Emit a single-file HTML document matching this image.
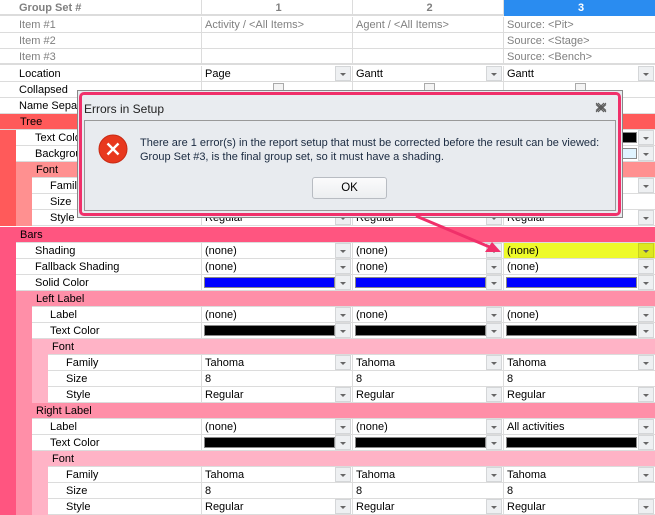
<!DOCTYPE html>
<html><head><style>
*{margin:0;padding:0;box-sizing:border-box}
body{width:655px;height:515px;overflow:hidden;background:#fff;font-family:"Liberation Sans","DejaVu Sans",sans-serif;font-size:11px;color:#000;position:relative}
.r{position:absolute;left:0;width:655px;height:16px;border-bottom:1px solid #dcdcdc}
.b{position:absolute;top:0;height:16px}
.l{position:absolute;top:1px;white-space:nowrap;line-height:15px}
.c{position:absolute;top:0;height:15px;border-left:1px solid #dcdcdc;padding-left:3px;line-height:16px;white-space:nowrap}
.c1{left:201px;width:151px}.c2{left:352px;width:151px}.c3{left:503px;width:152px}
.c i{position:absolute;right:1px;top:0;width:16px;height:15px;background:#eef0f2;border:1px solid #d4d6d8}
.c i:after{content:"";position:absolute;left:4px;top:6px;border-left:3.5px solid transparent;border-right:3.5px solid transparent;border-top:3px solid #666}
.sw{position:absolute;left:2px;top:2px;height:11px;width:131px;border:1px solid #888}
.g{color:#808080}
.ck{position:absolute;top:1px;width:11px;height:8px;border:1px solid #aaa;border-bottom:none;background:#f4f4f4}
</style></head><body>

<div class="r" style="top:0;border-bottom:2px solid #dcdcdc"><span class="l g" style="left:19px;font-weight:bold">Group Set #</span>
<div class="c c1 g" style="text-align:center;font-weight:bold">1</div><div class="c c2 g" style="text-align:center;font-weight:bold">2</div><div class="c c3" style="text-align:center;font-weight:bold;background:#2a8cf0;color:#fff;height:16px">3</div></div>
<div class="r" style="top:17px"><span class="l g" style="left:19px">Item #1</span><div class="c c1 g">Activity / &lt;All Items&gt;</div><div class="c c2 g">Agent / &lt;All Items&gt;</div><div class="c c3 g">Source: &lt;Pit&gt;</div></div>
<div class="r" style="top:33px"><span class="l g" style="left:19px">Item #2</span><div class="c c1"></div><div class="c c2"></div><div class="c c3 g">Source: &lt;Stage&gt;</div></div>
<div class="r" style="top:49px;border-bottom:2px solid #dcdcdc"><span class="l g" style="left:19px">Item #3</span><div class="c c1"></div><div class="c c2"></div><div class="c c3 g">Source: &lt;Bench&gt;</div></div>

<div class="r" style="top:66px"><span class="l" style="left:19px">Location</span><div class="c c1">Page<i></i></div><div class="c c2">Gantt<i></i></div><div class="c c3">Gantt<i></i></div></div>
<div class="r" style="top:82px"><span class="l" style="left:19px">Collapsed</span><div class="c c1"><span class="ck" style="left:71px"></span></div><div class="c c2"><span class="ck" style="left:71px"></span></div><div class="c c3"><span class="ck" style="left:71px"></span></div></div>
<div class="r" style="top:98px"><span class="l" style="left:19px">Name Separator</span><div class="c c1"></div><div class="c c2"></div><div class="c c3"></div></div>

<div class="r" style="top:114px;background:#ff5a5a"><span class="l" style="left:20px">Tree</span></div>
<div class="r" style="top:130px"><span class="l" style="left:35px">Text Color</span><div class="c c1"><span class="sw" style="background:#000"></span><i></i></div><div class="c c2"><span class="sw" style="background:#000"></span><i></i></div><div class="c c3"><span class="sw" style="background:#000"></span><i></i></div></div>
<div class="r" style="top:146px"><span class="l" style="left:35px">Background</span><div class="c c1"><i></i></div><div class="c c2"><i></i></div><div class="c c3"><span class="sw" style="background:#e0f4ff"></span><i></i></div></div>
<div class="r" style="top:162px;left:16px;width:639px;background:#ff9090"><span class="l" style="left:20px">Font</span></div>
<div class="r" style="top:178px"><span class="l" style="left:50px">Family</span><div class="c c1">Tahoma<i></i></div><div class="c c2">Tahoma<i></i></div><div class="c c3">Tahoma<i></i></div></div>
<div class="r" style="top:194px"><span class="l" style="left:50px">Size</span><div class="c c1">8</div><div class="c c2">8</div><div class="c c3">8</div></div>
<div class="r" style="top:210px"><span class="l" style="left:50px">Style</span><div class="c c1">Regular<i></i></div><div class="c c2">Regular<i></i></div><div class="c c3">Regular<i></i></div></div>

<div class="r" style="top:227px;background:#ff5580"><span class="l" style="left:20px">Bars</span></div>
<div class="r" style="top:243px"><span class="l" style="left:35px">Shading</span><div class="c c1">(none)<i></i></div><div class="c c2">(none)<i></i></div><div class="c c3" style="background:#eefa2a">(none)<i style="background:#dde820;border-color:#c8d020"></i></div></div>
<div class="r" style="top:259px"><span class="l" style="left:35px">Fallback Shading</span><div class="c c1">(none)<i></i></div><div class="c c2">(none)<i></i></div><div class="c c3">(none)<i></i></div></div>
<div class="r" style="top:275px"><span class="l" style="left:35px">Solid Color</span><div class="c c1"><span class="sw" style="background:#0000ff"></span><i></i></div><div class="c c2"><span class="sw" style="background:#0000ff"></span><i></i></div><div class="c c3"><span class="sw" style="background:#0000ff"></span><i></i></div></div>

<div class="r" style="top:291px;left:16px;width:639px;background:#ff8fa8"><span class="l" style="left:20px">Left Label</span></div>
<div class="r" style="top:307px"><span class="l" style="left:50px">Label</span><div class="c c1">(none)<i></i></div><div class="c c2">(none)<i></i></div><div class="c c3">(none)<i></i></div></div>
<div class="r" style="top:323px"><span class="l" style="left:50px">Text Color</span><div class="c c1"><span class="sw" style="background:#000"></span><i></i></div><div class="c c2"><span class="sw" style="background:#000"></span><i></i></div><div class="c c3"><span class="sw" style="background:#000"></span><i></i></div></div>
<div class="r" style="top:339px;left:32px;width:623px;background:#ffb3c6"><span class="l" style="left:20px">Font</span></div>
<div class="r" style="top:355px"><span class="l" style="left:66px">Family</span><div class="c c1">Tahoma<i></i></div><div class="c c2">Tahoma<i></i></div><div class="c c3">Tahoma<i></i></div></div>
<div class="r" style="top:371px"><span class="l" style="left:66px">Size</span><div class="c c1">8</div><div class="c c2">8</div><div class="c c3">8</div></div>
<div class="r" style="top:387px"><span class="l" style="left:66px">Style</span><div class="c c1">Regular<i></i></div><div class="c c2">Regular<i></i></div><div class="c c3">Regular<i></i></div></div>

<div class="r" style="top:403px;left:16px;width:639px;background:#ff8fa8"><span class="l" style="left:20px">Right Label</span></div>
<div class="r" style="top:419px"><span class="l" style="left:50px">Label</span><div class="c c1">(none)<i></i></div><div class="c c2">(none)<i></i></div><div class="c c3">All activities<i></i></div></div>
<div class="r" style="top:435px"><span class="l" style="left:50px">Text Color</span><div class="c c1"><span class="sw" style="background:#000"></span><i></i></div><div class="c c2"><span class="sw" style="background:#000"></span><i></i></div><div class="c c3"><span class="sw" style="background:#000"></span><i></i></div></div>
<div class="r" style="top:451px;left:32px;width:623px;background:#ffb3c6"><span class="l" style="left:20px">Font</span></div>
<div class="r" style="top:467px"><span class="l" style="left:66px">Family</span><div class="c c1">Tahoma<i></i></div><div class="c c2">Tahoma<i></i></div><div class="c c3">Tahoma<i></i></div></div>
<div class="r" style="top:483px"><span class="l" style="left:66px">Size</span><div class="c c1">8</div><div class="c c2">8</div><div class="c c3">8</div></div>
<div class="r" style="top:499px"><span class="l" style="left:66px">Style</span><div class="c c1">Regular<i></i></div><div class="c c2">Regular<i></i></div><div class="c c3">Regular<i></i></div></div>

<!-- bands on top -->
<div class="b" style="left:0;top:130px;width:16px;height:96px;background:#ff5a5a"></div>
<div class="b" style="left:16px;top:177px;width:16px;height:49px;background:#ff9090"></div>
<div class="b" style="left:0;top:242px;width:16px;height:273px;background:#ff5580"></div>
<div class="b" style="left:16px;top:306px;width:16px;height:97px;background:#ff8fa8"></div>
<div class="b" style="left:32px;top:354px;width:16px;height:49px;background:#ffb3c6"></div>
<div class="b" style="left:16px;top:418px;width:16px;height:97px;background:#ff8fa8"></div>
<div class="b" style="left:32px;top:466px;width:16px;height:49px;background:#ffb3c6"></div>

<div style="position:absolute;left:77px;top:90px;width:546px;height:128px;border:1px solid #888;background:#e8ebef"></div>
<div style="position:absolute;left:79px;top:92px;width:542px;height:124px;border:3px solid #f0306a;border-radius:5px;background:#e9ecf0">
 <span style="position:absolute;left:2px;top:7px;font-size:12px;color:#222">Errors in Setup</span>
 <svg style="position:absolute;left:513px;top:7px" width="12" height="11" viewBox="0 0 12 11"><path d="M1 1L11 10M11 1L1 10M3 1L11 8.5M1 2.5L9 10M9 1L1 8.5M11 2.5L3 10" stroke="#555" stroke-width="1" fill="none"/></svg>
 <div style="position:absolute;left:2px;top:25px;width:532px;height:91px;border:1px solid #999;background:#e8ebef">
  <svg style="position:absolute;left:13px;top:13px" width="30" height="30" viewBox="0 0 30 30"><circle cx="15" cy="15" r="14" fill="#e8381e" stroke="#c82a14"/><path d="M9.5 9.5L20.5 20.5M20.5 9.5L9.5 20.5" stroke="#fff" stroke-width="2.4"/></svg>
  <div style="position:absolute;left:55px;top:15px;font-size:11px;line-height:14px;color:#1a2a40;white-space:nowrap">There are 1 error(s) in the report setup that must be corrected before the result can be viewed:<br>Group Set #3, is the final group set, so it must have a shading.</div>
  <div style="position:absolute;left:227px;top:56px;width:75px;height:22px;border:1px solid #b8bcc2;border-radius:3px;background:linear-gradient(#fbfbfc,#eceef0);text-align:center;line-height:20px;font-size:11.5px">OK</div>
 </div>
</div>

<svg style="position:absolute;left:0;top:0" width="655" height="515"><path d="M416 216L492 248" stroke="#f0306a" stroke-width="3"/><path d="M501 252L485 252L492 242Z" fill="#f0306a"/></svg>
</body></html>
